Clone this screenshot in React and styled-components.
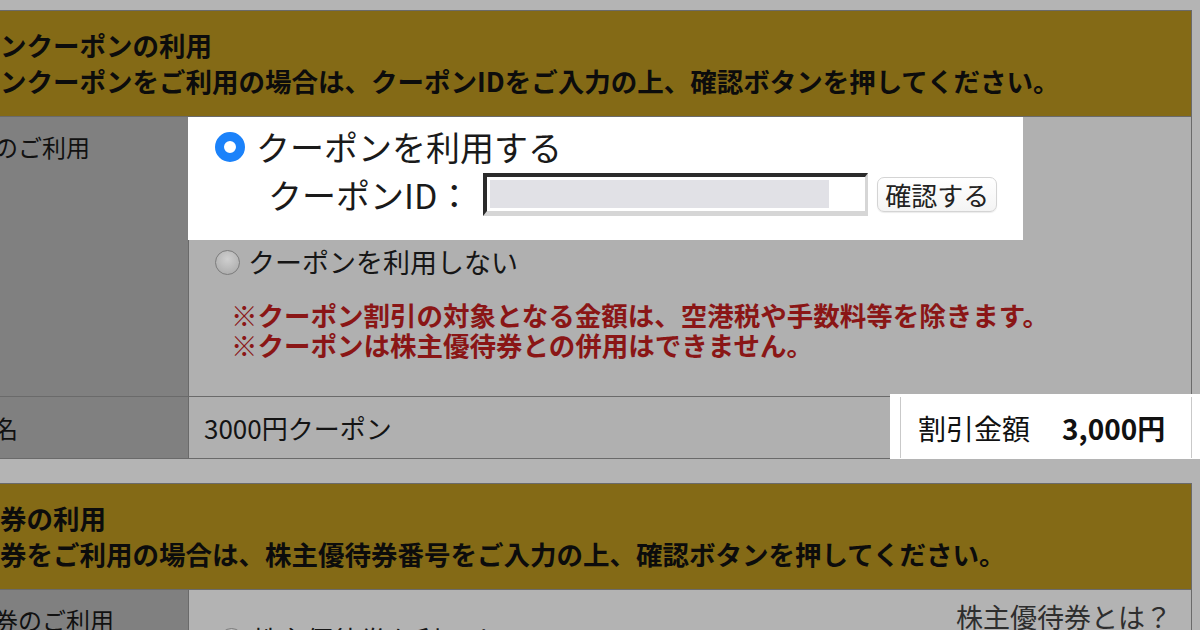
import React from 'react';
import styled, { createGlobalStyle } from 'styled-components';

const GlobalStyle = createGlobalStyle`
    html, body {
        margin: 0;
        padding: 0;
        background: #b4b4b4;
        overflow: hidden;
    }
    body {
        font-family: "Noto Sans CJK JP", "Noto Sans", sans-serif;
        color: #111;
    }
`;

const Page = styled.div`
    width: 1310px;
    margin-left: -118px;
    padding-top: 10px;
    display: flex;
    flex-direction: column;
    gap: 24px;
`;

const Section = styled.section`
    border: 1px solid #6a6a6a;
    border-bottom: none;
    display: flex;
    flex-direction: column;
`;

const Header = styled.div`
    background: #846a16;
    padding: 16px 11px 17px;
    font-size: 26.5px;
    font-weight: 700;
    line-height: 36px;
    color: #0c0c0c;
    border-bottom: 1px solid #6a6a6a;
    white-space: nowrap;
`;

const Row = styled.div`
    display: grid;
    grid-template-columns: 306px 1fr;
    border-bottom: 1px solid #6a6a6a;
    min-height: ${p => p.$h}px;
`;

const Label = styled.div`
    background: #808080;
    border-right: 1px solid #6a6a6a;
    padding: 0 12px 0 15px;
    padding-top: ${p => (p.$center ? 0 : p.$top)}px;
    font-size: 24px;
    line-height: 36px;
    color: #111;
    white-space: nowrap;
    display: flex;
    align-items: ${p => (p.$center ? 'center' : 'flex-start')};
`;

const Cell = styled.div`
    background: #b0b0b0;
    display: flex;
    flex-direction: column;
`;

const Spotlight = styled.div`
    width: 834px;
    background: #fff;
    padding: 10px 0 24px 1px;
    margin-left: -1px;
    display: flex;
    flex-direction: column;
    gap: 6px;
`;

const BigOption = styled.label`
    display: flex;
    align-items: center;
    padding-left: 26px;
    font-size: 34px;
    line-height: 40px;
    color: #1a1a1a;
`;

const CheckedRadio = styled.span`
    width: 30px;
    height: 30px;
    box-sizing: border-box;
    border-radius: 50%;
    border: 9px solid #1b82fa;
    background: #fff;
    margin-right: 11px;
    flex-shrink: 0;
`;

const IdLine = styled.div`
    display: flex;
    align-items: center;
    padding-left: 79px;
    font-size: 34px;
    line-height: 43px;
    color: #1a1a1a;
`;

const IdInput = styled.div`
    width: 385px;
    height: 43px;
    box-sizing: border-box;
    margin-left: 12px;
    background: #fff;
    border-style: solid;
    border-width: 4px 3px 5px 4px;
    border-color: #2b2b2b #d6d6d6 #d6d6d6 #2b2b2b;
    padding: 3px 36px 3px 3px;
    display: flex;
`;

const Redacted = styled.div`
    flex: 1;
    background: #e1e1e6;
`;

const ConfirmButton = styled.button`
    margin-left: 9px;
    height: 35px;
    padding: 0 7px;
    font-family: inherit;
    font-size: 26px;
    line-height: 33px;
    color: #222;
    background: linear-gradient(#fff, #f4f4f4);
    border: 1px solid #d4d4d4;
    border-radius: 7px;
    box-shadow: 0 1px 1px rgba(0, 0, 0, 0.08);
`;

const Option = styled.label`
    display: flex;
    align-items: center;
    padding: 4px 0 0 26px;
    font-size: 27px;
    line-height: 36px;
    color: #161616;
`;

const EmptyRadio = styled.span`
    width: 25px;
    height: 25px;
    box-sizing: border-box;
    border-radius: 50%;
    border: 1px solid #7c7c7c;
    background: radial-gradient(circle at 50% 35%, #cfcfcf, #a6a6a6);
    margin-right: 8px;
    flex-shrink: 0;
`;

const Notes = styled.div`
    padding: 20px 0 36px 42px;
    font-size: 26.5px;
    font-weight: 700;
    line-height: 30px;
    color: #8a1616;
    white-space: nowrap;
`;

const NameRow = styled.div`
    display: grid;
    grid-template-columns: 711px 1fr;
    background: #b0b0b0;
`;

const NameCell = styled.div`
    display: flex;
    align-items: center;
    padding-left: 15px;
    font-size: 26px;
    color: #141414;
`;

const AmountCell = styled.div`
    background: #fff;
    border-left: 1px solid #c9c9c9;
    border-right: 1px solid #c9c9c9;
    margin-right: -1px;
    box-shadow: 0 -1px 0 2px #fff, -8px -1px 0 2px #fff, 10px -1px 0 2px #fff;
    display: flex;
    align-items: center;
    padding-left: 17px;
    font-size: 28px;
    color: #111;
    white-space: nowrap;
`;

const Amount = styled.b`
    font-weight: 700;
    margin-left: 32px;
`;

const CellLight = styled(Cell)`
    background: #b3b3b3;
    padding-top: 10px;
`;

const HelpLink = styled.div`
    align-self: flex-end;
    padding-right: 19px;
    font-size: 27px;
    line-height: 34px;
    color: #2e2e2e;
`;

const LowOption = styled(Option)`
    padding: 0 0 0 30px;
    margin-top: -12px;
`;

export default function App() {
    return (
        <>
            <GlobalStyle />
            <Page>
                <Section>
                    <Header>
                        <div>オンラインクーポンの利用</div>
                        <div>オンラインクーポンをご利用の場合は、クーポンIDをご入力の上、確認ボタンを押してください。</div>
                    </Header>
                    <Row $h={278}>
                        <Label $top={12}>クーポンのご利用</Label>
                        <Cell>
                            <Spotlight>
                                <BigOption>
                                    <CheckedRadio />
                                    クーポンを利用する
                                </BigOption>
                                <IdLine>
                                    クーポンID：
                                    <IdInput>
                                        <Redacted />
                                    </IdInput>
                                    <ConfirmButton>確認する</ConfirmButton>
                                </IdLine>
                            </Spotlight>
                            <Option>
                                <EmptyRadio />
                                クーポンを利用しない
                            </Option>
                            <Notes>
                                <div>※クーポン割引の対象となる金額は、空港税や手数料等を除きます。</div>
                                <div>※クーポンは株主優待券との併用はできません。</div>
                            </Notes>
                        </Cell>
                    </Row>
                    <Row $h={61}>
                        <Label $center>クーポン名</Label>
                        <NameRow>
                            <NameCell>3000円クーポン</NameCell>
                            <AmountCell>
                                割引金額<Amount>3,000円</Amount>
                            </AmountCell>
                        </NameRow>
                    </Row>
                </Section>
                <Section>
                    <Header>
                        <div>株主優待券の利用</div>
                        <div>株主優待券をご利用の場合は、株主優待券番号をご入力の上、確認ボタンを押してください。</div>
                    </Header>
                    <Row $h={120}>
                        <Label $top={12}>株主優待券のご利用</Label>
                        <CellLight>
                            <HelpLink>株主優待券とは？</HelpLink>
                            <LowOption>
                                <EmptyRadio />
                                株主優待券を利用する
                            </LowOption>
                        </CellLight>
                    </Row>
                </Section>
            </Page>
        </>
    );
}
